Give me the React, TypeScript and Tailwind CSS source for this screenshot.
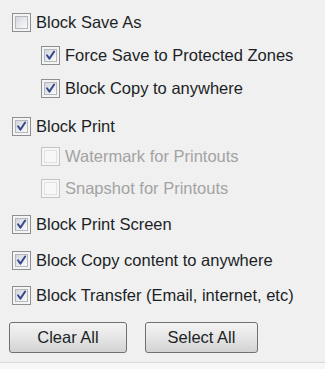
import { useState } from "react";

type Item = { key: string; label: string; indent?: boolean; disabled?: boolean; mt: string };

const items: Item[] = [
  { key: "saveAs", label: "Block Save As", mt: "mt-[12px]" },
  { key: "forceSave", label: "Force Save to Protected Zones", indent: true, mt: "mt-[13px]" },
  { key: "copyAny", label: "Block Copy to anywhere", indent: true, mt: "mt-[13px]" },
  { key: "print", label: "Block Print", mt: "mt-[18px]" },
  { key: "watermark", label: "Watermark for Printouts", indent: true, disabled: true, mt: "mt-[10px]" },
  { key: "snapshot", label: "Snapshot for Printouts", indent: true, disabled: true, mt: "mt-[12px]" },
  { key: "printScreen", label: "Block Print Screen", mt: "mt-[16px]" },
  { key: "copyContent", label: "Block Copy content to anywhere", mt: "mt-[16px]" },
  { key: "transfer", label: "Block Transfer (Email, internet, etc)", mt: "mt-[15px]" },
];

function Box({ checked, disabled }: { checked: boolean; disabled?: boolean }) {
  return (
    <span
      className={
        "flex h-[19px] w-[19px] shrink-0 items-center justify-center border p-[2px] " +
        (disabled ? "border-[#c4c4c4] bg-[#f6f6f6]" : "border-[#8e8f8f] bg-[#f4f4f4]")
      }
    >
      <span
        className={
          "relative block h-full w-full border " +
          (disabled
            ? "border-[#e2e2e2] bg-[#f7f7f7]"
            : "border-[#b4b8be] bg-gradient-to-br from-[#d3d6db] to-[#fbfbfb]")
        }
      >
        {checked && (
          <svg viewBox="0 0 13 13" className="absolute inset-0 h-full w-full">
            <path d="M2.4 6.2 L5.2 10.2 L10.8 1.8" fill="none" stroke="#34488c" strokeWidth="2.3" strokeLinecap="round" strokeLinejoin="round" />
          </svg>
        )}
      </span>
    </span>
  );
}

export default function App() {
  const [state, setState] = useState<Record<string, boolean>>({
    saveAs: false,
    forceSave: true,
    copyAny: true,
    print: true,
    watermark: false,
    snapshot: false,
    printScreen: true,
    copyContent: true,
    transfer: true,
  });

  const setAll = (v: boolean) => {
    const next: Record<string, boolean> = {};
    items.forEach((i) => (next[i.key] = i.disabled ? state[i.key] : v));
    setState(next);
  };

  return (
    <div className="flex h-[369px] w-[325px] flex-col bg-[#f0f0f0] font-['Liberation_Sans',Arial,sans-serif] text-[16.5px] text-[#1c1f26]">
      <div className="flex flex-1 flex-col">
        {items.map((i) => (
          <label
            key={i.key}
            onClick={() => !i.disabled && setState({ ...state, [i.key]: !state[i.key] })}
            className={
              "flex h-[20px] items-center gap-[5px] " +
              i.mt +
              (i.indent ? " pl-[41px]" : " pl-[12px]") +
              (i.disabled ? " text-[#a3a3a3]" : "")
            }
          >
            <Box checked={state[i.key]} disabled={i.disabled} />
            <span className="whitespace-nowrap leading-none">{i.label}</span>
          </label>
        ))}

        <div className="mt-[17px] flex gap-[18px] pl-[9px]">
          <button
            onClick={() => setAll(false)}
            className="h-[31px] w-[118px] rounded-[3px] border border-[#707070] bg-gradient-to-b from-[#f3f3f3] via-[#e6e6e6] to-[#d2d2d2] text-[#1c1f26]"
          >
            Clear All
          </button>
          <button
            onClick={() => setAll(true)}
            className="h-[31px] w-[113px] rounded-[3px] border border-[#707070] bg-gradient-to-b from-[#f3f3f3] via-[#e6e6e6] to-[#d2d2d2] text-[#1c1f26]"
          >
            Select All
          </button>
        </div>
      </div>
      <div className="h-[7px] border-t border-[#d9d9d9] bg-[#f7f7f7]" />
    </div>
  );
}
